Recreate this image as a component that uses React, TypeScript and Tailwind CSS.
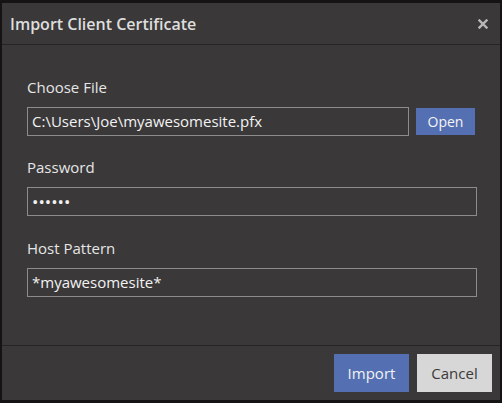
import React from 'react';

const font = { fontFamily: '"Open Sans", "Noto Sans", sans-serif' };

interface FieldProps {
  label: string;
  children: React.ReactNode;
  className?: string;
}

const Field: React.FC<FieldProps> = ({ label, children, className }) => (
  <div className={className}>
    <div className="text-[15px] leading-5 text-[#e6e6e6]">{label}</div>
    <div className="mt-[10px] flex items-center">{children}</div>
  </div>
);

const TextBox: React.FC<{ value: string; className?: string }> = ({ value, className }) => (
  <div
    className={`h-[29px] border border-[#8c8c8c] px-[4px] text-[15px] leading-[27px] text-[#f2f2f2] ${className ?? ''}`}
  >
    {value}
  </div>
);

export default function App() {
  return (
    <div className="h-screen w-screen overflow-hidden bg-[#151313] pl-[2px] pt-[3px]" style={font}>
      <div className="flex h-[397px] w-[498px] flex-col bg-[#3a3839]">
        {/* Header */}
        <div className="flex h-[42px] items-center justify-between border-b border-[#262525] pl-[8px] pr-[12px]">
          <span className="text-[16px] font-semibold text-[#dedede]">Import Client Certificate</span>
          <svg width="10" height="10" viewBox="0 0 10 10" className="mt-[1px]">
            <path d="M1.5 1.5 L8.5 8.5 M8.5 1.5 L1.5 8.5" stroke="#b8b8b8" strokeWidth="2.4" strokeLinecap="square" />
          </svg>
        </div>

        {/* Body */}
        <div className="flex-1 pl-[25px] pr-[23px] pt-[32px]">
          <Field label="Choose File">
            <TextBox value="C:\Users\Joe\myawesomesite.pfx" className="w-[382px]" />
            <button className="ml-[7px] h-[27px] w-[59px] bg-[#5470b3] text-[14px] text-[#f4f4f4]">Open</button>
          </Field>
          <Field label="Password" className="mt-[21px]">
            <TextBox value="••••••" className="w-full text-[17px]" />
          </Field>
          <Field label="Host Pattern" className="mt-[22px]">
            <TextBox value="*myawesomesite*" className="w-full" />
          </Field>
        </div>

        {/* Footer */}
        <div className="flex justify-end gap-[8px] border-t border-[#262525] pb-[8px] pr-[8px] pt-[8px]">
          <button className="h-[38px] w-[75px] bg-[#5470b3] text-[15px] text-[#f2f2f2]">Import</button>
          <button className="h-[38px] w-[75px] bg-[#d7d7d7] text-[15px] text-[#3a3a3a]">Cancel</button>
        </div>
      </div>
    </div>
  );
}
